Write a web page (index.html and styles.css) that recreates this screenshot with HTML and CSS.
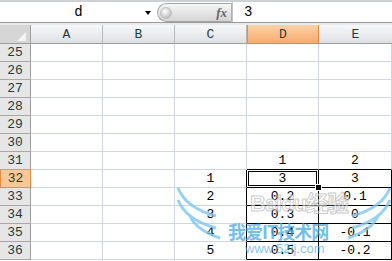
FILE: index.html
```html
<!DOCTYPE html>
<html>

<head>
  <meta charset="UTF-8">
  <title>Sheet</title>
  <link rel="stylesheet" href="styles.css">
</head>

<body>
  <div class="topbar">
    <div class="namebox"><span>d</span><i class="arrow"></i></div>
    <div class="fxbar"><i class="knob"></i><span class="fx">fx</span></div>
    <div class="formula">3</div>
  </div>

  <div class="sheet">
    <div class="corner"><i></i></div>
    <div class="ch">A</div>
    <div class="ch">B</div>
    <div class="ch">C</div>
    <div class="ch hl">D</div>
    <div class="ch last">E</div>

    <div class="rh">25</div><div class="c"></div><div class="c"></div><div class="c"></div><div class="c"></div><div class="c"></div>
    <div class="rh">26</div><div class="c"></div><div class="c"></div><div class="c"></div><div class="c"></div><div class="c"></div>
    <div class="rh">27</div><div class="c"></div><div class="c"></div><div class="c"></div><div class="c"></div><div class="c"></div>
    <div class="rh">28</div><div class="c"></div><div class="c"></div><div class="c"></div><div class="c"></div><div class="c"></div>
    <div class="rh">29</div><div class="c"></div><div class="c"></div><div class="c"></div><div class="c"></div><div class="c"></div>
    <div class="rh">30</div><div class="c"></div><div class="c"></div><div class="c"></div><div class="c"></div><div class="c"></div>
    <div class="rh">31</div><div class="c"></div><div class="c"></div><div class="c"></div><div class="c bb">1</div><div class="c bb">2</div>
    <div class="rh hl">32</div><div class="c"></div><div class="c"></div><div class="c br">1</div><div class="c bt active">3</div><div class="c bt">3</div>
    <div class="rh">33</div><div class="c"></div><div class="c"></div><div class="c br">2</div><div class="c bt">0.2</div><div class="c bt">0.1</div>
    <div class="rh">34</div><div class="c"></div><div class="c"></div><div class="c br">3</div><div class="c bt">0.3</div><div class="c bt">0</div>
    <div class="rh">35</div><div class="c"></div><div class="c"></div><div class="c br">4</div><div class="c bt">0.4</div><div class="c bt">-0.1</div>
    <div class="rh">36</div><div class="c"></div><div class="c"></div><div class="c br">5</div><div class="c bt">0.5</div><div class="c bt">-0.2</div>
  </div>

  <!-- watermark over the sheet -->
  <div class="mark">
    <svg class="wings" width="216" height="70" viewBox="0 0 216 70">
      <path d="M2 2 Q10 22 40 30" stroke="#7cc8f2" stroke-width="3" fill="none" />
      <path d="M2 14 Q10 34 40 42" stroke="#7cc8f2" stroke-width="3" fill="none" />
      <path d="M14 30 Q20 44 44 52" stroke="#7cc8f2" stroke-width="3" fill="none" />
      <path d="M214 2 Q206 22 176 30" stroke="#7cc8f2" stroke-width="3" fill="none" />
      <path d="M214 14 Q206 34 176 42" stroke="#7cc8f2" stroke-width="3" fill="none" />
      <path d="M202 30 Q196 44 172 52" stroke="#7cc8f2" stroke-width="3" fill="none" />
    </svg>
    <div class="baidu">Bai<span>du</span>经验</div>
    <div class="site">我爱IT技术网</div>
    <div class="url">www.52ij.com</div>
  </div>
</body>

</html>
```

FILE: styles.css
```css
body {
  margin: 0;
  width: 392px;
  height: 261px;
  overflow: hidden;
  position: relative;
  background: #fff;
  font-family: "Liberation Mono", monospace;
}

.topbar {
  display: flex;
  height: 20px;
  border-top: 2px solid #cdd1d6;
  border-bottom: 1px solid #9a9a9a;
  background: #fff;
}

.namebox {
  width: 157px;
  display: flex;
  align-items: center;
  justify-content: center;
  position: relative;
  font-size: 14px;
  color: #000;
}

.arrow {
  position: absolute;
  left: 145px;
  top: 9px;
  border-left: 3px solid transparent;
  border-right: 3px solid transparent;
  border-top: 4px solid #000;
}

.fxbar {
  width: 75px;
  display: flex;
  align-items: center;
  justify-content: space-between;
  padding: 0 4px 0 2px;
  box-sizing: border-box;
  background: linear-gradient(#f6f6f6, #d4d4d4);
  border: 1px solid #a6a6a6;
  border-right-color: #b0b0b0;
  border-radius: 10px 0 0 10px;
  margin-top: 1px;
}

.knob {
  width: 10px;
  height: 10px;
  border-radius: 50%;
  background: radial-gradient(circle at 40% 35%, #fff, #a8a8a8);
  border: 1px solid #c0c0c0;
}

.fx {
  font-family: "Liberation Serif", serif;
  font-style: italic;
  font-weight: bold;
  font-size: 13px;
  color: #666;
}

.formula {
  flex: 1;
  padding-left: 11px;
  font-size: 14px;
  line-height: 20px;
  border-left: 1px solid #c4c4c4;
}

.sheet {
  display: grid;
  grid-template-columns: 31px 72px 72px 72px 72px 1fr;
  grid-template-rows: 19px;
  grid-auto-rows: 18px;
  border-top: 2px solid #e8eaec;
}

.sheet > div {
  box-sizing: border-box;
}

.corner {
  background: #d6d6d6;
  border-right: 1px solid #9e9e9e;
  border-bottom: 1px solid #9e9e9e;
  position: relative;
}

.corner i {
  position: absolute;
  right: 4px;
  bottom: 2px;
  border-left: 9px solid transparent;
  border-bottom: 9px solid #f4f4f4;
}

.ch {
  background: linear-gradient(#f7f8f9, #dee1e4);
  border-right: 1px solid #b4b8bc;
  border-bottom: 1px solid #9e9e9e;
  text-align: center;
  font-size: 13px;
  line-height: 19px;
  color: #1f3d3d;
}

.ch.last {
  border-right: none;
}

.ch.hl {
  background: linear-gradient(#fcd2a4, #f8aa6c);
  border: 1px solid #ee8a3c;
  border-top: none;
}

.rh {
  background: #e6e6e6;
  border-right: 1px solid #9e9e9e;
  border-bottom: 1px solid #a8a8a8;
  text-align: center;
  font-size: 13px;
  line-height: 18px;
  color: #1f3d3d;
}

.rh.hl {
  background: #f8c996;
  border: 1px solid #ee8a3c;
  border-top: none;
}

.c {
  border-right: 1px solid #cdd5e4;
  border-bottom: 1px solid #cdd5e4;
  text-align: center;
  font-size: 13px;
  line-height: 18px;
  color: #000;
}

.c.bb {
  border-bottom-color: #000;
}

.c.br {
  border-right-color: #000;
}

.c.bt {
  border-right-color: #000;
  border-bottom-color: #000;
}

.active {
  position: relative;
  line-height: 17px;
  box-shadow: inset 0 0 0 1px #fff, inset 0 0 0 2px #000;
}

.active::after {
  content: "";
  position: absolute;
  right: -4px;
  bottom: -4px;
  width: 5px;
  height: 5px;
  background: #000;
  border: 1px solid #fff;
  z-index: 2;
}

.mark {
  position: absolute;
  left: 176px;
  top: 186px;
  width: 216px;
  height: 75px;
  pointer-events: none;
}

.wings {
  position: absolute;
  left: 0;
  top: 0;
  opacity: 0.8;
}

.baidu {
  position: absolute;
  left: 74px;
  top: 6px;
  font-family: "Liberation Sans", "Noto Sans CJK SC", sans-serif;
  font-weight: bold;
  font-size: 22px;
  line-height: 24px;
  color: rgba(255, 255, 255, 0.55);
  -webkit-text-stroke: 1px rgba(150, 150, 150, 0.5);
  letter-spacing: -1px;
}

.site {
  position: absolute;
  left: 52px;
  top: 35px;
  font-family: "Noto Sans CJK SC", sans-serif;
  font-weight: bold;
  font-size: 18px;
  line-height: 20px;
  color: rgba(70, 170, 235, 0.75);
  letter-spacing: -1px;
}

.url {
  position: absolute;
  left: 69px;
  top: 56px;
  font-family: "Liberation Sans", sans-serif;
  font-size: 13px;
  line-height: 14px;
  color: rgba(90, 180, 240, 0.75);
}
```
